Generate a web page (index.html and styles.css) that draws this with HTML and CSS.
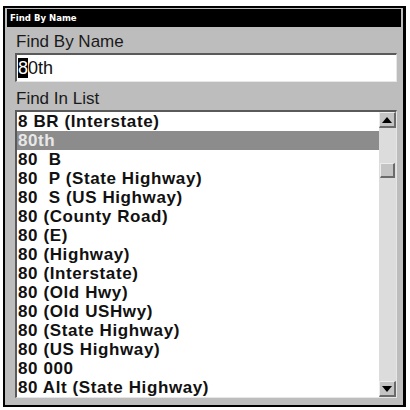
FILE: index.html
```html
<!DOCTYPE html>
<html lang="en">
<head>
    <meta charset="UTF-8">
    <title>Find By Name</title>
    <link rel="stylesheet" href="styles.css">
</head>
<body>

    <div class="window">
        <div class="titlebar">Find By Name</div>
        <div class="content">
            <div class="label">Find By Name</div>
            <div class="input"><span class="cursor">8</span>0th</div>

            <div class="label label-list">Find In List</div>
            <div class="listbox">
                <ul class="items">
                    <li>8 BR (Interstate)</li>
                    <li class="selected">80th</li>
                    <li>80&nbsp;&nbsp;B</li>
                    <li>80&nbsp;&nbsp;P (State Highway)</li>
                    <li>80&nbsp;&nbsp;S (US Highway)</li>
                    <li>80 (County Road)</li>
                    <li>80 (E)</li>
                    <li>80 (Highway)</li>
                    <li>80 (Interstate)</li>
                    <li>80 (Old Hwy)</li>
                    <li>80 (Old USHwy)</li>
                    <li>80 (State Highway)</li>
                    <li>80 (US Highway)</li>
                    <li>80 000</li>
                    <li>80 Alt (State Highway)</li>
                </ul>
                <div class="scrollbar">
                    <div class="scroll-btn">
                        <svg width="10" height="6" viewBox="0 0 10 6"><polygon points="5,0 10,6 0,6" fill="#000"/></svg>
                    </div>
                    <div class="track">
                        <div class="thumb"></div>
                    </div>
                    <div class="scroll-btn">
                        <svg width="10" height="6" viewBox="0 0 10 6"><polygon points="0,0 10,0 5,6" fill="#000"/></svg>
                    </div>
                </div>
            </div>
        </div>
    </div>

</body>
</html>
```

FILE: styles.css
```css
body {
    margin: 0;
    padding: 0;
    background-color: #fff;
    font-family: "Liberation Sans", Arial, sans-serif;
    color: #111;
}
.window {
    box-sizing: border-box;
    width: 403px;
    height: 401px;
    margin: 6px 0 0 3px;
    border: 2px solid #000;
    border-right-width: 3px;
    padding: 1px 2px 0 2px;
    background: #bdbdbd;
    overflow: hidden;
}
.titlebar {
    height: 18px;
    background: #000;
    color: #fff;
    font-family: "DejaVu Sans Condensed", "DejaVu Sans", sans-serif;
    font-weight: bold;
    font-size: 9.5px;
    line-height: 18px;
    padding-left: 3px;
}
.content {
    padding: 4px 4px 0 8px;
}
.label {
    font-size: 17px;
    line-height: 22px;
    padding-left: 1px;
    color: #1a1a1a;
}
.input {
    box-sizing: border-box;
    height: 29px;
    background: #fff;
    border-top: 2px solid #5a5a5a;
    border-left: 2px solid #5a5a5a;
    border-right: 1px solid #e6e6e6;
    border-bottom: 1px solid #e6e6e6;
    padding: 2px 0 0 1px;
    font-size: 18px;
    line-height: 22px;
}
.cursor {
    background: #000;
    color: #fff;
}
.label-list {
    margin-top: 6px;
}
.listbox {
    box-sizing: border-box;
    display: flex;
    height: 288px;
    background: #fff;
    border-top: 2px solid #5a5a5a;
    border-left: 2px solid #5a5a5a;
    border-right: 1px solid #e6e6e6;
    border-bottom: 1px solid #e6e6e6;
}
.items {
    flex: 1;
    margin: 0;
    padding: 1px 0 0 0;
    list-style: none;
    overflow: hidden;
}
.items li {
    height: 19px;
    line-height: 19px;
    padding-left: 1px;
    font-size: 17px;
    font-weight: bold;
    letter-spacing: 0.6px;
    white-space: nowrap;
}
.items li:first-child {
    height: 18px;
    line-height: 18px;
}
.items li.selected {
    background: #8c8c8c;
    color: #e8e8e8;
}
.scrollbar {
    width: 17px;
    display: flex;
    flex-direction: column;
    background: #dcdcdc;
}
.scroll-btn {
    box-sizing: border-box;
    height: 16px;
    display: flex;
    align-items: center;
    justify-content: center;
    background: #c4c4c4;
    border-top: 1px solid #ececec;
    border-left: 1px solid #ececec;
    border-right: 2px solid #6a6a6a;
    border-bottom: 2px solid #6a6a6a;
}
.track {
    flex: 1;
    padding-left: 1px;
}
.thumb {
    box-sizing: border-box;
    width: 15px;
    height: 15px;
    margin-top: 35px;
    background: #c4c4c4;
    border-top: 1px solid #ececec;
    border-left: 1px solid #ececec;
    border-right: 2px solid #6a6a6a;
    border-bottom: 2px solid #6a6a6a;
}
```
